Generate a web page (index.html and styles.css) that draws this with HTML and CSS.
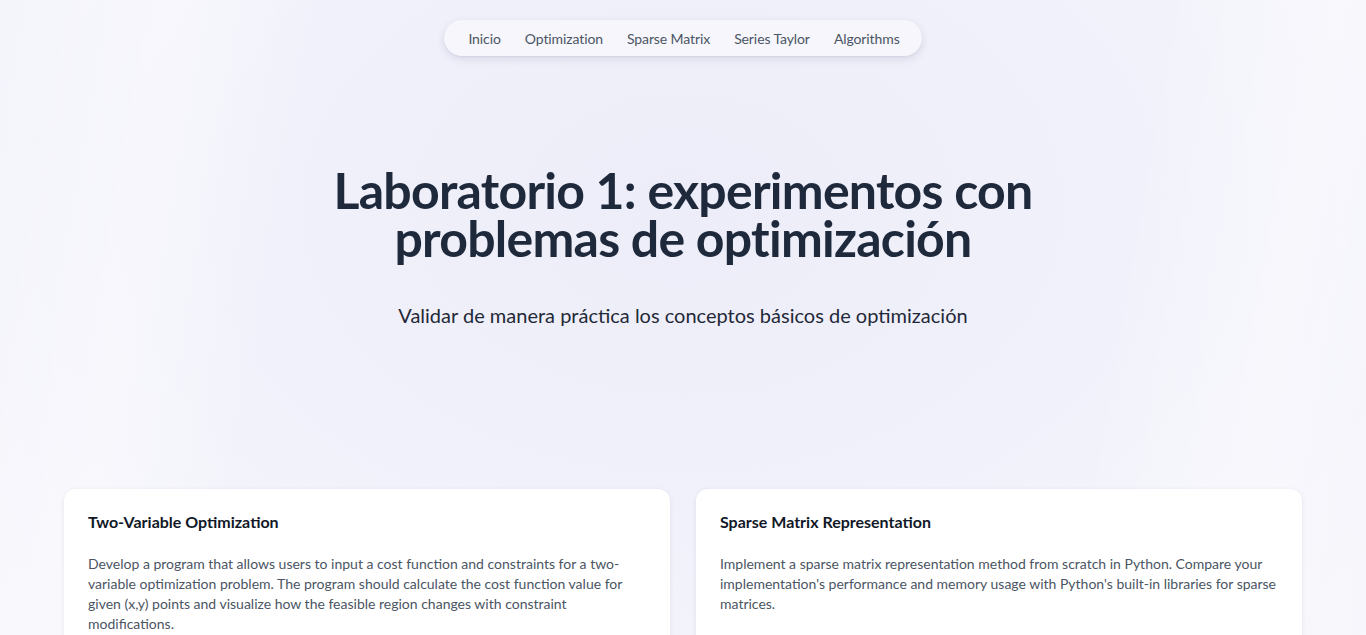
FILE: index.html
```html
<!DOCTYPE html>
<html lang="es">
<head>
<meta charset="utf-8">
<title>Laboratorio 1</title>
<link rel="stylesheet" href="styles.css">
</head>
<body>
<div class="page">
  <nav class="nav">
    <a href="#">Inicio</a>
    <a href="#">Optimization</a>
    <a href="#">Sparse Matrix</a>
    <a href="#">Series Taylor</a>
    <a href="#">Algorithms</a>
  </nav>
  <header class="hero">
    <h1>Laboratorio 1: experimentos con<br>problemas de optimización</h1>
    <p class="subtitle">Validar de manera práctica los conceptos básicos de optimización</p>
  </header>
  <section class="cards">
    <article class="card">
      <h2>Two-Variable Optimization</h2>
      <p>Develop a program that allows users to input a cost function and constraints for a two-variable optimization problem. The program should calculate the cost function value for given (x,y) points and visualize how the feasible region changes with constraint modifications.</p>
    </article>
    <article class="card">
      <h2>Sparse Matrix Representation</h2>
      <p>Implement a sparse matrix representation method from scratch in Python. Compare your implementation's performance and memory usage with Python's built-in libraries for sparse matrices.</p>
    </article>
  </section>
</div>
</body>
</html>
```
FILE: styles.css
```css
* { box-sizing: border-box; }
html, body { margin: 0; padding: 0; }
body {
  font-family: Lato, "Noto Sans", sans-serif;
  color: #1f2937;
  background:
    linear-gradient(100deg, rgba(255,255,255,0) 0%, rgba(255,255,255,0.35) 12%, rgba(255,255,255,0) 22%, rgba(255,255,255,0) 78%, rgba(255,255,255,0.35) 90%, rgba(255,255,255,0) 100%),
    radial-gradient(ellipse at 50% 30%, #ededf9 0%, #f1f1fb 45%, #f7f7fc 100%);
  min-height: 635px;
  overflow: hidden;
}
.page {
  display: flex;
  flex-direction: column;
  align-items: center;
  padding-top: 20px;
}
.nav {
  display: flex;
  gap: 24px;
  height: 36px;
  align-items: center;
  padding: 0 22px 0 24px;
  background: #f6f6fc;
  border-radius: 18px;
  box-shadow: 0 3px 8px rgba(80, 80, 120, 0.14), 0 1px 2px rgba(80, 80, 120, 0.08);
}
.nav a {
  font-size: 14px;
  letter-spacing: -0.1px;
  color: #4b5563;
  text-decoration: none;
}
.hero {
  text-align: center;
  margin-top: 110px;
}
.hero h1 {
  margin: 0;
  font-size: 50px;
  line-height: 48px;
  font-weight: 700;
  color: #1e293b;
  letter-spacing: -0.75px;
}
.subtitle {
  margin: 39px 0 0;
  font-size: 20px;
  line-height: 28px;
  color: #1f2937;
}
.cards {
  margin-top: 160px;
  width: 100%;
  padding: 0 64px;
  display: grid;
  grid-template-columns: 1fr 1fr;
  gap: 26px;
}
.card {
  background: #fff;
  border-radius: 12px;
  padding: 23px 24px 40px;
  box-shadow: 0 1px 4px rgba(60, 60, 100, 0.1);
  min-height: 200px;
}
.card h2 {
  margin: 0;
  font-size: 16px;
  line-height: 20px;
  font-weight: 700;
  color: #111827;
}
.card p {
  margin: 22px 0 0;
  font-size: 14px;
  line-height: 20px;
  color: #4b5563;
}
```
